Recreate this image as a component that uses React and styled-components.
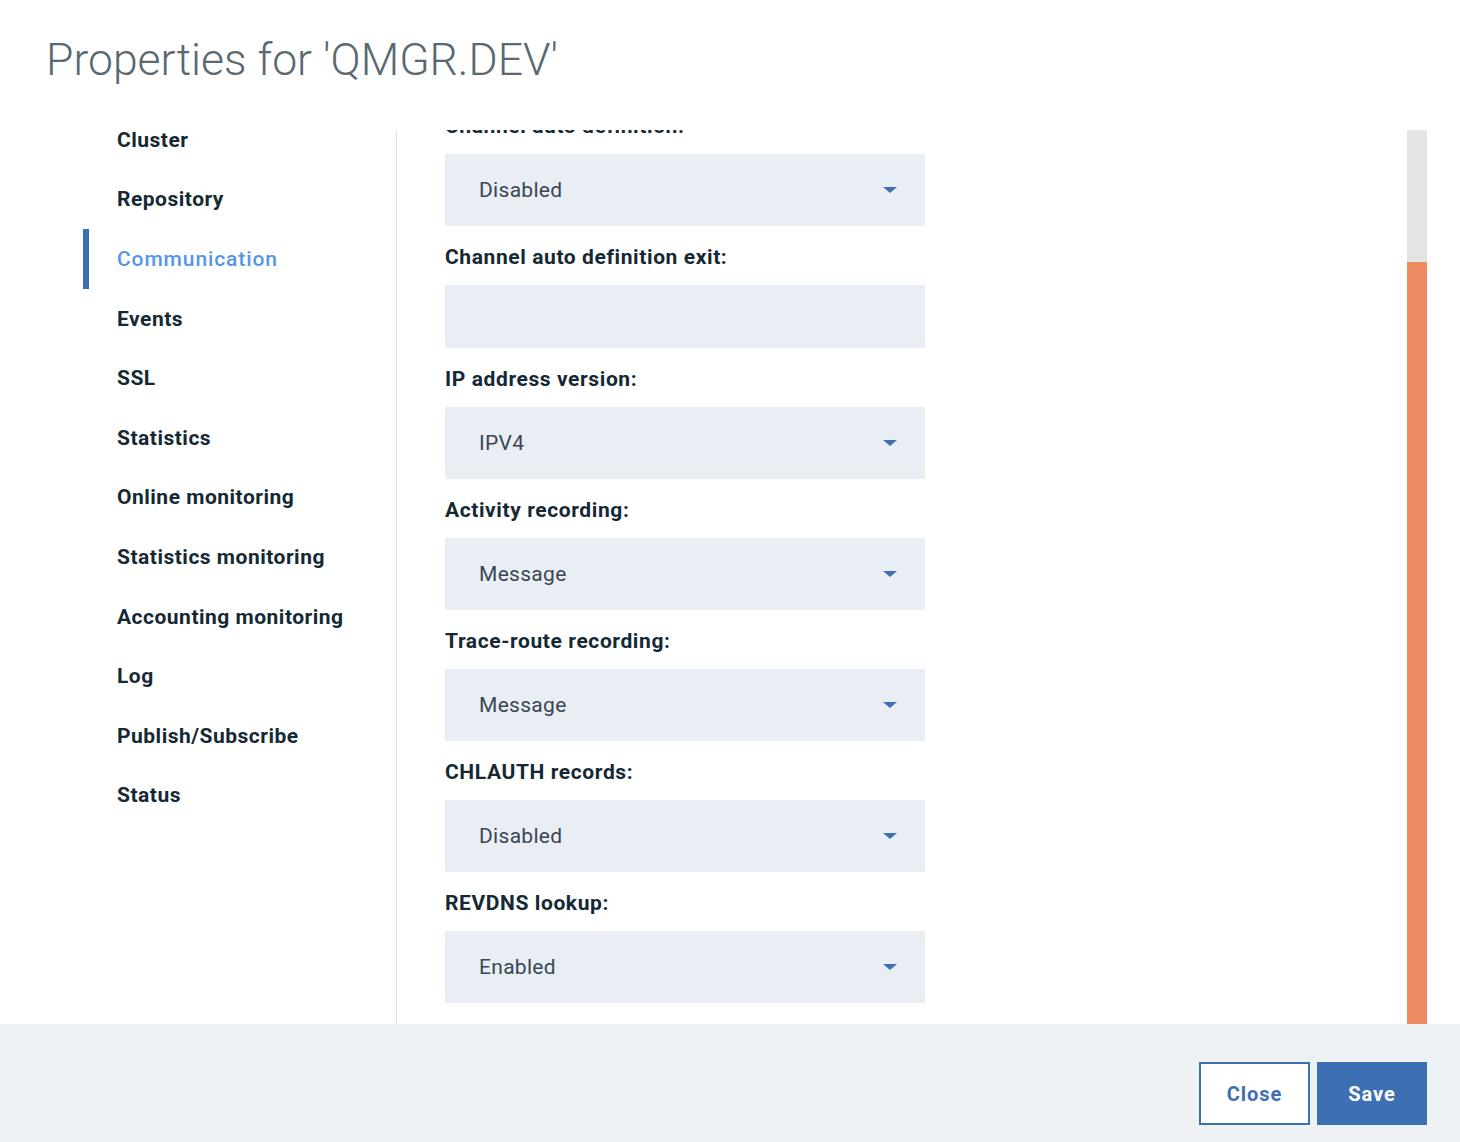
import React from "react";
import styled, { createGlobalStyle } from "styled-components";

const GlobalStyle = createGlobalStyle`
  html, body {
    margin: 0;
    padding: 0;
    background: #fff;
  }
  body {
    font-family: Roboto, "Liberation Sans", sans-serif;
    color: #152935;
  }
  * {
    box-sizing: border-box;
  }
`;

// 메뉴 목록
const navItems = [
  "Cluster",
  "Repository",
  "Communication",
  "Events",
  "SSL",
  "Statistics",
  "Online monitoring",
  "Statistics monitoring",
  "Accounting monitoring",
  "Log",
  "Publish/Subscribe",
  "Status",
];

// 폼 필드 목록
const fields = [
  { label: "Channel auto definition:", type: "select", value: "Disabled" },
  { label: "Channel auto definition exit:", type: "input", value: "" },
  { label: "IP address version:", type: "select", value: "IPV4" },
  { label: "Activity recording:", type: "select", value: "Message" },
  { label: "Trace-route recording:", type: "select", value: "Message" },
  { label: "CHLAUTH records:", type: "select", value: "Disabled" },
  { label: "REVDNS lookup:", type: "select", value: "Enabled" },
];

function Caret() {
  return (
    <svg width="16" height="8" viewBox="0 0 16 8">
      <path d="M1 1 L15 1 L8 7 Z" fill="#3d70b2" />
    </svg>
  );
}

function App() {
  return (
    <>
      <GlobalStyle />
      <Modal>
        <Header>
          <Title>Properties for 'QMGR.DEV'</Title>
        </Header>

        <Body>
          <Nav>
            {navItems.map((item) => (
              <NavItem key={item} $active={item === "Communication"}>
                {item}
              </NavItem>
            ))}
          </Nav>
          <Divider />

          <Panel>
            <ScrollArea>
              <Form>
                {fields.map((f) => (
                  <Field key={f.label}>
                    <Label>{f.label}</Label>
                    {f.type === "select" ? (
                      <SelectBox>
                        <span>{f.value}</span>
                        <Caret />
                      </SelectBox>
                    ) : (
                      <TextBox />
                    )}
                  </Field>
                ))}
              </Form>
            </ScrollArea>
            <Track>
              <Thumb />
            </Track>
          </Panel>
        </Body>

        <Footer>
          <Button>Close</Button>
          <Button $primary>Save</Button>
        </Footer>
      </Modal>
    </>
  );
}

export default App;

const Modal = styled.div`
  width: 1460px;
  height: 1142px;
  display: flex;
  flex-direction: column;
  background: #fff;
  overflow: hidden;
`;

const Header = styled.div`
  height: 110px;
  padding: 31px 0 0 46px;
`;

const Title = styled.h1`
  margin: 0;
  font-family: Roboto, "Liberation Sans", sans-serif;
  font-weight: 300;
  font-size: 44.5px;
  line-height: 58px;
  color: #5a6872;
`;

const Body = styled.div`
  flex: 1;
  display: flex;
  min-height: 0;
`;

const Nav = styled.ul`
  list-style: none;
  margin: 0;
  padding: 0 0 0 83px;
  width: 396px;
`;

const NavItem = styled.li`
  height: 59.6px;
  display: flex;
  align-items: center;
  padding-left: 28px;
  border-left: 6px solid ${(p) => (p.$active ? "#3d70b2" : "transparent")};
  font-size: 21px;
  font-weight: ${(p) => (p.$active ? 500 : 700)};
  color: ${(p) => (p.$active ? "#5596e6" : "#152935")};
  letter-spacing: ${(p) => (p.$active ? "0.9px" : "0.5px")};
`;

const Divider = styled.div`
  width: 1px;
  margin-top: 20px;
  background: #dfe3e6;
`;

const Panel = styled.div`
  flex: 1;
  display: flex;
  margin-top: 20px;
  padding-right: 33px;
  min-width: 0;
`;

const ScrollArea = styled.div`
  flex: 1;
  overflow: hidden;
`;

const Form = styled.div`
  margin-top: -16px;
  padding-left: 48px;
  width: 528px;
`;

const Field = styled.div`
  display: flex;
  flex-direction: column;
  gap: 16px;
  margin-bottom: 19px;
`;

const Label = styled.label`
  font-size: 21px;
  line-height: 24px;
  font-weight: 700;
  color: #152935;
  letter-spacing: 0.6px;
  white-space: nowrap;
`;

const SelectBox = styled.div`
  height: 72px;
  background: #e9eef5;
  display: flex;
  align-items: center;
  justify-content: space-between;
  padding: 0 27px 0 34px;
  font-size: 21px;
  letter-spacing: 0.3px;
  color: #3a4652;
`;

const TextBox = styled.div`
  height: 63px;
  background: #e9eef5;
`;

const Track = styled.div`
  width: 20px;
  background: #e4e4e4;
  display: flex;
  flex-direction: column;
  justify-content: flex-end;
`;

const Thumb = styled.div`
  height: 762px;
  background: #ef8c64;
`;

const Footer = styled.div`
  height: 118px;
  background: #eff2f5;
  display: flex;
  justify-content: flex-end;
  align-items: flex-start;
  gap: 7px;
  padding: 38px 33px 0 0;
`;

const Button = styled.button`
  width: ${(p) => (p.$primary ? "110px" : "111px")};
  height: 63px;
  border: 2px solid #3d70b2;
  background: ${(p) => (p.$primary ? "#3d70b2" : "#fff")};
  color: ${(p) => (p.$primary ? "#fff" : "#3d70b2")};
  font-family: Roboto, "Liberation Sans", sans-serif;
  font-size: 20px;
  font-weight: 700;
  letter-spacing: 1px;
  cursor: pointer;
`;
